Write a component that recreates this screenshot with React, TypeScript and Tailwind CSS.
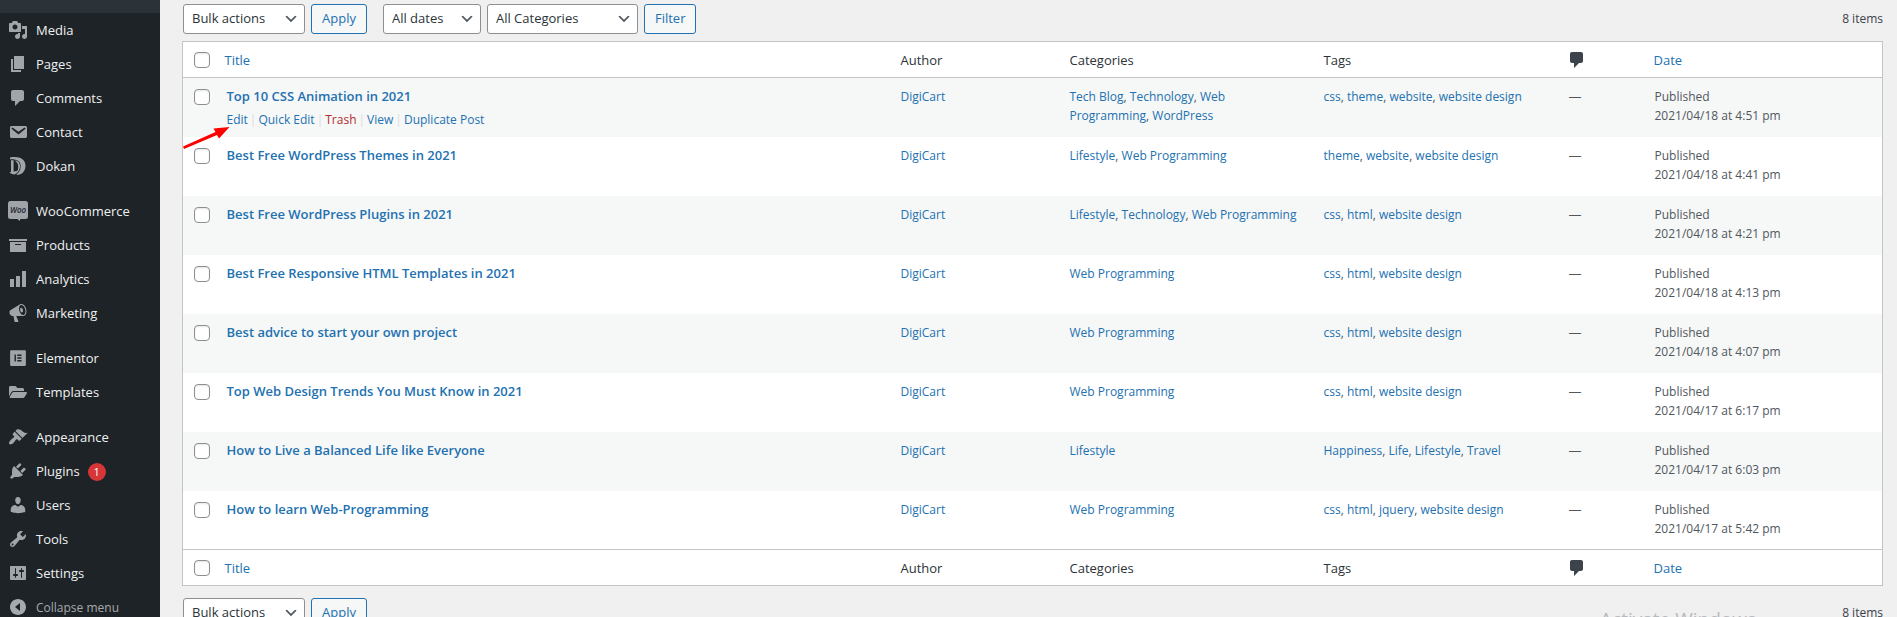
import type { ReactNode } from 'react';
import { Fragment } from 'react';
import { FaElementor, FaFolderOpen } from 'react-icons/fa';

const glyphs = {
  media:
    'M13 11V4c0-.55-.45-1-1-1h-1.67L9 1H5L3.67 3H2c-.55 0-1 .45-1 1v7c0 .55.45 1 1 1h10c.55 0 1-.45 1-1zM7 4.5c1.38 0 2.5 1.12 2.5 2.5S8.38 9.5 7 9.5 4.5 8.38 4.5 7 5.62 4.5 7 4.5zM14 6h5v10.5c0 1.38-1.12 2.5-2.5 2.5S14 17.88 14 16.5s1.12-2.5 2.5-2.5c.17 0 .34.02.5.05V9h-3V6zm-4 8.05V13h2v3.5c0 1.38-1.12 2.5-2.5 2.5S7 17.88 7 16.5 8.12 14 9.5 14c.17 0 .34.02.5.05z',
  page: 'M6 15V2h10v13H6zm-1 1h8v2H3V5h2v11z',
  comment:
    'M5 2h9c1.1 0 2 .9 2 2v7c0 1.1-.9 2-2 2h-2l-5 5v-5H5c-1.1 0-2-.9-2-2V4c0-1.1.9-2 2-2z',
  email:
    'M3.87 4h13.25C18.37 4 19 4.59 19 5.79v8.42c0 1.19-.63 1.79-1.88 1.79H3.87c-1.25 0-1.88-.6-1.88-1.79V5.79c0-1.2.63-1.79 1.88-1.79zm6.62 8.6l6.74-5.53c.24-.2.43-.66.13-1.07-.29-.41-.82-.42-1.17-.17l-5.7 3.86L4.8 5.83c-.35-.25-.88-.24-1.17.17-.3.41-.11.87.13 1.07z',
  archive: 'M19 4v2H1V4h18zM2 7h16v10H2V7zm11 3V9H7v1h6z',
  chart: 'M18 18V2h-4v16h4zm-6 0V7H8v11h4zm-6 0v-8H2v8h4z',
  megaphone:
    'M18.15 5.94c.46 1.62.38 3.22-.02 4.48-.42 1.28-1.26 2.18-2.3 2.48-.16.06-.26.06-.4.06-.06.02-.12.02-.18.02-.06.02-.14.02-.22.02h-6.8l2.22 5.5c.02.14-.06.26-.14.34-.08.1-.24.16-.34.16H6.95c-.1 0-.26-.06-.34-.16-.08-.08-.16-.2-.14-.34l-1-5.5H4.25l-.02-.02c-.5.06-1.08-.18-1.54-.62s-.88-1.08-1.06-1.88c-.24-.8-.2-1.56-.02-2.2.18-.62.58-1.08 1.06-1.3l.02-.02 9-5.4c.1-.06.18-.1.24-.16.06-.04.14-.08.24-.12.16-.08.28-.12.5-.18 1.04-.3 2.24.1 3.22.98s1.84 2.24 2.26 3.86zm-2.58 5.98h-.02c.4-.1.74-.34 1.04-.7.58-.7.86-1.76.86-3.04 0-.64-.1-1.3-.28-1.98-.34-1.36-1.02-2.5-1.78-3.24s-1.68-1.1-2.46-.88c-.82.22-1.4.96-1.7 2-.32 1.04-.28 2.36.06 3.72.38 1.36 1 2.5 1.8 3.24.78.74 1.62 1.1 2.48.88zm-2.54-7.08c.22-.04.42-.02.62.04.38.16.76.48 1.02 1s.42 1.2.42 1.78c0 .3-.04.56-.12.8-.18.48-.44.84-.86.94-.34.1-.8-.06-1.14-.4s-.64-.86-.78-1.5c-.18-.62-.12-1.24.02-1.72s.48-.84.82-.94z',
  brush:
    'M14.48 11.06L7.41 3.99l1.5-1.5c.5-.56 2.3-.47 3.51.32 1.21.8 1.43 1.28 2.91 2.1 1.18.64 2.45 1.26 4.45.85zm-.71.71L6.7 4.7 4.93 6.47c-.39.39-.39 1.02 0 1.41l1.06 1.06c.39.39.39 1.03 0 1.42-.6.6-1.43 1.11-2.21 1.69-.35.26-.7.53-1.01.84C1.43 14.23.4 16.08 1.4 17.07c.99 1 2.84-.03 4.18-1.36.31-.31.58-.66.85-1.02.57-.78 1.08-1.61 1.69-2.21.39-.39 1.02-.39 1.41 0l1.06 1.06c.39.39 1.02.39 1.41 0z',
  plug: 'M13.11 4.36L9.87 7.6 8 5.73l3.24-3.24c.35-.34 1.05-.2 1.56.32.52.51.66 1.21.31 1.55zm-8 1.77l.91-1.12 9.01 9.01-1.19.84c-.71.71-2.63 1.16-3.82 1.16H6.14L4.9 17.26c-.59.59-1.54.59-2.12 0-.59-.58-.59-1.53 0-2.12l1.24-1.24v-3.88c0-1.13.4-3.19 1.09-3.89zm7.26 3.97l3.24-3.24c.34-.35 1.04-.21 1.55.31.52.51.66 1.21.31 1.55l-3.24 3.25z',
  user: 'M10 9.25c-2.27 0-2.73-3.44-2.73-3.44C7 4.02 7.82 2 9.97 2c2.16 0 2.98 2.02 2.71 3.81 0 0-.41 3.44-2.68 3.44zm0 2.57L12.72 10c2.39 0 4.52 2.33 4.52 4.53v2.49s-3.65 1.13-7.24 1.13c-3.65 0-7.24-1.13-7.24-1.13v-2.49c0-2.25 1.94-4.48 4.47-4.48z',
  wrench:
    'M16.68 9.77c-1.34 1.34-3.3 1.67-4.95.99l-5.41 6.52c-.99.99-2.59.99-3.58 0s-.99-2.59 0-3.57l6.52-5.42c-.68-1.65-.35-3.61.99-4.95 1.28-1.28 3.12-1.62 4.72-1.06l-2.89 2.89 2.82 2.82 2.86-2.87c.53 1.58.18 3.39-1.08 4.65zM3.81 16.21c.4.39 1.04.39 1.43 0 .4-.4.4-1.04 0-1.43-.39-.4-1.03-.4-1.43 0-.39.39-.39 1.03 0 1.43z',
  sliders:
    'M18 16V4c0-.55-.45-1-1-1H3c-.55 0-1 .45-1 1v12c0 .55.45 1 1 1h14c.55 0 1-.45 1-1zM8 11h1c.55 0 1 .45 1 1s-.45 1-1 1H8v1.5c0 .28-.22.5-.5.5s-.5-.22-.5-.5V13H6c-.55 0-1-.45-1-1s.45-1 1-1h1V5.5c0-.28.22-.5.5-.5s.5.22.5.5V11zm5-2h-1c-.55 0-1-.45-1-1s.45-1 1-1h1V5.5c0-.28.22-.5.5-.5s.5.22.5.5V7h1c.55 0 1 .45 1 1s-.45 1-1 1h-1v5.5c0 .28-.22.5-.5.5s-.5-.22-.5-.5V9z',
  collapse:
    'M10 2c4.42 0 8 3.58 8 8s-3.58 8-8 8-8-3.58-8-8 3.58-8 8-8zm2 12V6l-5 4z',
};

function Glyph({ name }: { name: keyof typeof glyphs }) {
  return (
    <svg viewBox="0 0 20 20" className="size-5 fill-current" aria-hidden="true">
      <path fillRule="evenodd" d={glyphs[name]} />
    </svg>
  );
}

function DokanIcon() {
  return (
    <svg viewBox="0 0 20 20" className="size-5 fill-current" aria-hidden="true">
      <path d="M2 1.500C11-.2 17.500 3 17.500 9.800c0 5.200-3.200 8.600-7.600 9.200l-1.600-.8c3.400-1.600 4.300-4.600 4.300-8.400C12.600 5.400 9.500 3 2 3.200z" />
      <path d="M3 4.200h2.600v11.200l3.600-.4c1.200-1.600 1.300-5.600.4-7.600L6.800 4.200c3.600.8 5.200 2.800 5.200 5.800 0 4.600-2.600 7.400-5.600 8.400-1.800 0-3.800-.6-4.900-1.800L3 15.800z" />
    </svg>
  );
}

function WooIcon() {
  return (
    <svg viewBox="0 0 20 20" className="size-5" aria-hidden="true">
      <path
        className="fill-current"
        d="M2.500 0h15A2.500 2.500 0 0 1 20 2.500v13a2.500 2.500 0 0 1-2.500 2.500H12.300l-.4 2-2.600-2H2.500A2.500 2.500 0 0 1 0 15.500v-13A2.500 2.500 0 0 1 2.500 0z"
      />
      <text
        x="10"
        y="12"
        textAnchor="middle"
        className="fill-[#1d2327] text-[8px] font-semibold italic"
      >
        Woo
      </text>
    </svg>
  );
}

type MenuItem = { label: string; icon: ReactNode; badge?: string };

const menu: MenuItem[][] = [
  [
    { label: 'Media', icon: <Glyph name="media" /> },
    { label: 'Pages', icon: <Glyph name="page" /> },
    { label: 'Comments', icon: <Glyph name="comment" /> },
    { label: 'Contact', icon: <Glyph name="email" /> },
    { label: 'Dokan', icon: <DokanIcon /> },
  ],
  [
    { label: 'WooCommerce', icon: <WooIcon /> },
    { label: 'Products', icon: <Glyph name="archive" /> },
    { label: 'Analytics', icon: <Glyph name="chart" /> },
    { label: 'Marketing', icon: <Glyph name="megaphone" /> },
  ],
  [
    { label: 'Elementor', icon: <FaElementor size={18} /> },
    { label: 'Templates', icon: <FaFolderOpen size={18} /> },
  ],
  [
    { label: 'Appearance', icon: <Glyph name="brush" /> },
    { label: 'Plugins', icon: <Glyph name="plug" />, badge: '1' },
    { label: 'Users', icon: <Glyph name="user" /> },
    { label: 'Tools', icon: <Glyph name="wrench" /> },
    { label: 'Settings', icon: <Glyph name="sliders" /> },
  ],
];

type Post = { title: string; categories: string[]; tags: string[]; date: string };

const posts: Post[] = [
  {
    title: 'Top 10 CSS Animation in 2021',
    categories: ['Tech Blog', 'Technology', 'Web Programming', 'WordPress'],
    tags: ['css', 'theme', 'website', 'website design'],
    date: '2021/04/18 at 4:51 pm',
  },
  {
    title: 'Best Free WordPress Themes in 2021',
    categories: ['Lifestyle', 'Web Programming'],
    tags: ['theme', 'website', 'website design'],
    date: '2021/04/18 at 4:41 pm',
  },
  {
    title: 'Best Free WordPress Plugins in 2021',
    categories: ['Lifestyle', 'Technology', 'Web Programming'],
    tags: ['css', 'html', 'website design'],
    date: '2021/04/18 at 4:21 pm',
  },
  {
    title: 'Best Free Responsive HTML Templates in 2021',
    categories: ['Web Programming'],
    tags: ['css', 'html', 'website design'],
    date: '2021/04/18 at 4:13 pm',
  },
  {
    title: 'Best advice to start your own project',
    categories: ['Web Programming'],
    tags: ['css', 'html', 'website design'],
    date: '2021/04/18 at 4:07 pm',
  },
  {
    title: 'Top Web Design Trends You Must Know in 2021',
    categories: ['Web Programming'],
    tags: ['css', 'html', 'website design'],
    date: '2021/04/17 at 6:17 pm',
  },
  {
    title: 'How to Live a Balanced Life like Everyone',
    categories: ['Lifestyle'],
    tags: ['Happiness', 'Life', 'Lifestyle', 'Travel'],
    date: '2021/04/17 at 6:03 pm',
  },
  {
    title: 'How to learn Web-Programming',
    categories: ['Web Programming'],
    tags: ['css', 'html', 'jquery', 'website design'],
    date: '2021/04/17 at 5:42 pm',
  },
];

function Sidebar() {
  return (
    <nav
      aria-label="Main menu"
      className="w-40 shrink-0 bg-[#1d2327] text-[13px] text-[#f0f0f1]"
    >
      <div className="h-[13px] bg-[#2c3338]" />
      <div className="flex flex-col gap-[11px]">
        {menu.map((group) => (
          <ul key={group[0].label}>
            {group.map((item) => (
              <li key={item.label}>
                <a href="#" className="flex h-[34px] items-center">
                  <span className="flex w-9 shrink-0 justify-center text-[#a1a5aa]">
                    {item.icon}
                  </span>
                  <span className="flex items-center gap-2 pt-0.5">
                    {item.label}
                    {item.badge && (
                      <span className="flex size-[18px] items-center justify-center rounded-full bg-[#d63638] text-[11px] text-white">
                        {item.badge}
                      </span>
                    )}
                  </span>
                </a>
              </li>
            ))}
          </ul>
        ))}
      </div>
      <button type="button" className="flex h-[34px] w-full items-center text-[12px] text-[#a7aaad]">
        <span className="flex w-9 shrink-0 justify-center">
          <Glyph name="collapse" />
        </span>
        <span className="pt-0.5">Collapse menu</span>
      </button>
    </nav>
  );
}

function Select({ label, value, width }: { label: string; value: string; width: string }) {
  return (
    <div className={`relative ${width}`}>
      <select
        aria-label={label}
        className="block h-[30px] w-full appearance-none rounded-[3px] border border-[#8c8f94] bg-white pr-6 pl-2 text-[13px] text-[#2c3338]"
      >
        <option>{value}</option>
      </select>
      <svg
        viewBox="0 0 20 20"
        className="pointer-events-none absolute top-[7px] right-1.5 size-4 fill-[#50575e]"
        aria-hidden="true"
      >
        <path d="M5 6l5 5 5-5 2 1-7 7-7-7 2-1z" />
      </svg>
    </div>
  );
}

function Button({ children }: { children: ReactNode }) {
  return (
    <button
      type="button"
      className="h-[30px] rounded-[3px] border border-[#2271b1] bg-[#f6f7f7] px-2.5 text-[13px] text-[#2271b1]"
    >
      {children}
    </button>
  );
}

function Toolbar({ filters = false }: { filters?: boolean }) {
  return (
    <div className="flex items-center pl-px">
      <div className="flex gap-1.5">
        <Select label="Select bulk action" value="Bulk actions" width="w-[122px]" />
        <Button>Apply</Button>
      </div>
      {filters && (
        <div className="ml-4 flex gap-1.5">
          <Select label="Filter by date" value="All dates" width="w-[98px]" />
          <Select label="Filter by category" value="All Categories" width="w-[151px]" />
          <Button>Filter</Button>
        </div>
      )}
      <span className="ml-auto text-[12px] text-[#3c434a]">8 items</span>
    </div>
  );
}

function Checkbox({ label }: { label: string }) {
  return (
    <input
      type="checkbox"
      aria-label={label}
      className="block size-4 appearance-none rounded-[4px] border border-[#8c8f94] bg-white shadow-[inset_0_1px_2px_rgba(0,0,0,0.1)]"
    />
  );
}

function HeadingRow({ position }: { position: string }) {
  return (
    <tr className="h-9 text-left text-[13px] text-[#2c3338] [&>th]:px-2.5 [&>th]:pt-px [&>th]:pb-0 [&>th]:font-normal [&>th:first-child]:pr-0 [&>th:first-child]:pl-[11px] [&>th:nth-child(6)]:pl-2">
      <th>
        <Checkbox label={`Select all, ${position}`} />
      </th>
      <th>
        <a href="#" className="text-[#2271b1]">
          Title
        </a>
      </th>
      <th>Author</th>
      <th>Categories</th>
      <th>Tags</th>
      <th aria-label="Comments" className="text-[#3c434a]">
        <Glyph name="comment" />
      </th>
      <th>
        <a href="#" className="text-[#2271b1]">
          Date
        </a>
      </th>
    </tr>
  );
}

function LinkList({ items }: { items: string[] }) {
  return (
    <>
      {items.map((item, i) => (
        <Fragment key={item}>
          {i > 0 && ', '}
          <a href="#" className="text-[#2271b1]">
            {item}
          </a>
        </Fragment>
      ))}
    </>
  );
}

function RowActions() {
  const actions = ['Edit', 'Quick Edit', 'Trash', 'View', 'Duplicate Post'];
  return (
    <div className="relative mt-1 flex gap-0.5">
      {actions.map((action, i) => (
        <Fragment key={action}>
          {i > 0 && <span className="text-[#dcdcde]">|</span>}
          <a href="#" className={action === 'Trash' ? 'text-[#b32d2e]' : 'text-[#2271b1]'}>
            {action}
          </a>
        </Fragment>
      ))}
      <svg
        viewBox="0 0 48 26"
        className="absolute top-3.5 -left-11 h-[26px] w-12 fill-[#fe0000]"
        aria-hidden="true"
      >
        <path d="M0 22.500L32.500 8 30.500 4.500 46.500 3 36 14.500 34 11 1 25z" />
      </svg>
    </div>
  );
}

function PostsTable() {
  return (
    <table className="w-full table-fixed border border-[#c3c4c7] bg-white text-[12px] leading-[19px] text-[#50575e]">
      <colgroup>
        <col className="w-8" />
        <col />
        <col className="w-[169px]" />
        <col className="w-[254px]" />
        <col className="w-[245px]" />
        <col className="w-[85px]" />
        <col className="w-[239px]" />
      </colgroup>
      <thead className="border-b border-[#c3c4c7]">
        <HeadingRow position="top" />
      </thead>
      <tbody>
        {posts.map((post, i) => (
          <tr
            key={post.title}
            className="h-[59px] odd:bg-[#f6f7f7] [&>td]:px-2.5 [&>td]:pt-[9px] [&>td]:pb-0 [&>td]:align-top [&>td:first-child]:pt-[11px] [&>td:first-child]:pr-0 [&>td:first-child]:pl-[11px] [&>td:last-child]:pl-[11px] [&>td:nth-child(2)]:pl-3"
          >
            <td>
              <Checkbox label={`Select ${post.title}`} />
            </td>
            <td>
              <a href="#" className="block text-[13px] font-semibold text-[#2271b1]">
                {post.title}
              </a>
              {i === 0 && <RowActions />}
            </td>
            <td>
              <a href="#" className="text-[#2271b1]">
                DigiCart
              </a>
            </td>
            <td>
              <LinkList items={post.categories} />
            </td>
            <td>
              <LinkList items={post.tags} />
            </td>
            <td className="text-[13px]">—</td>
            <td>
              Published
              <br />
              {post.date}
            </td>
          </tr>
        ))}
      </tbody>
      <tfoot className="border-t border-[#c3c4c7]">
        <HeadingRow position="bottom" />
      </tfoot>
    </table>
  );
}

export default function App() {
  return (
    <div className="relative flex h-screen overflow-hidden bg-[#f0f0f1] font-['Open_Sans','Noto_Sans',sans-serif]">
      <Sidebar />
      <main className="flex min-w-0 flex-1 flex-col pt-1 pr-3.5 pl-[22px]">
        <Toolbar filters />
        <div className="mt-[7px] mb-3">
          <PostsTable />
        </div>
        <Toolbar />
      </main>
      <p className="absolute right-[141px] -bottom-4 text-[19px] text-[#b9babc]">
        Activate Windows
      </p>
    </div>
  );
}
